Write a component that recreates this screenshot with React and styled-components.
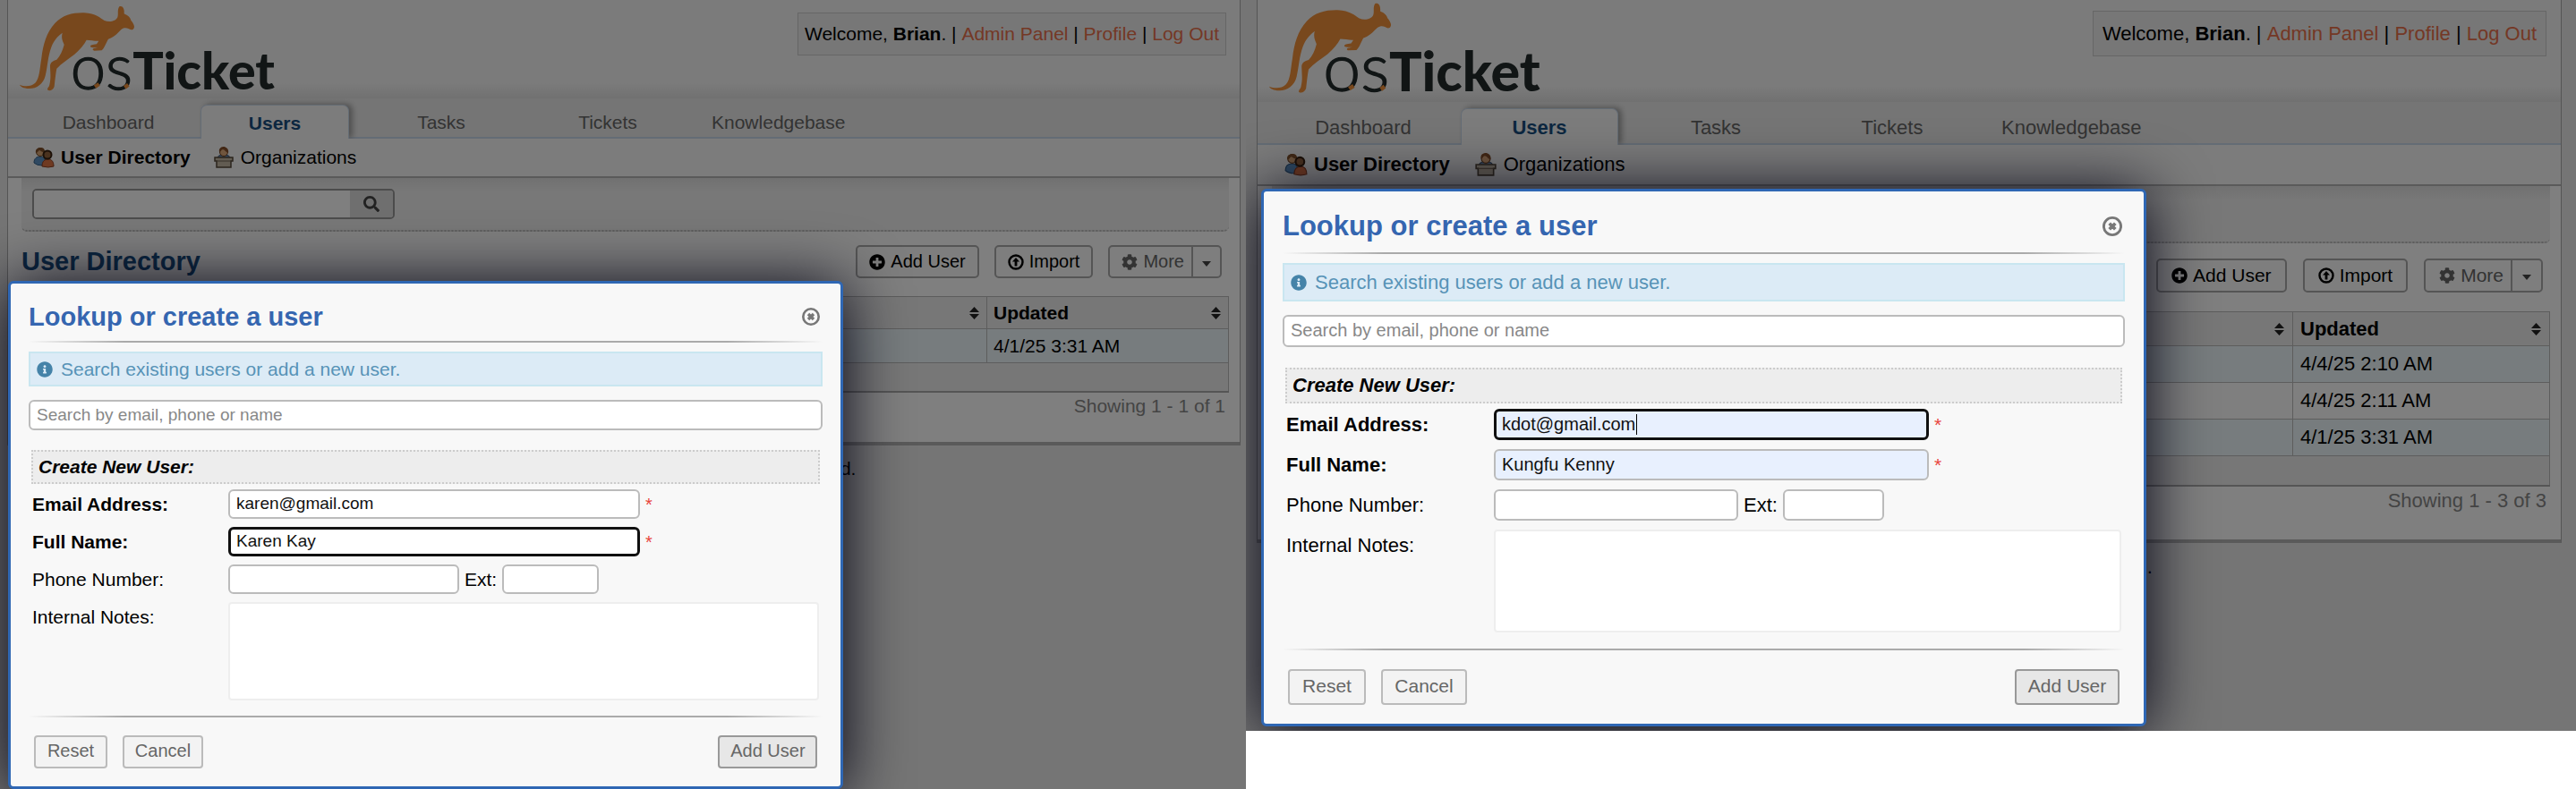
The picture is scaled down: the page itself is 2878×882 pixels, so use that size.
import React from "react";
import styled, { createGlobalStyle, css, ThemeProvider } from "styled-components";
import { FaPlusCircle, FaCog, FaSearch, FaInfoCircle } from "react-icons/fa";

const GlobalStyle = createGlobalStyle`
  *, *::before, *::after { box-sizing: border-box; }
  body {
    margin: 0;
    background: #fff;
    color: #000;
    font-family: "Liberation Sans", Arial, Helvetica, sans-serif;
  }
  button, input, textarea { font-family: inherit; margin: 0; }
`;

/* Two zoom levels of the same interface. */
const regular = {
  body: 21, control: 20, field: 19, heading: 29,
  edge: 8, edgeRight: 6, gutter: 15,
  headerHeight: 110, logoWidth: 290, logoHeight: 108, logoIndent: 11, logoBase: 2,
  welcomeTop: 14, welcomeHeight: 48, welcomePad: 7,
  navHeight: 45, tabWidth: 166, tabHeight: 38, tabGap: 20, navIndent: 29,
  subHeight: 44, subIndent: 28, subGap: 25, icon: 24, iconGap: 7,
  stickyHeight: 60, stickyPad: 12, searchWidth: 405, searchHeight: 34, searchButton: 48,
  actionTop: 15, actionHeight: 37, actionGap: 17, actionPad: 13, caretWidth: 32,
  tableTop: 20, headRow: 36, dataRow: 38, footRow: 32, dateCol: 270, cellPad: 7,
  pagerHeight: 55, pagerPad: 4, footerTop: 14,
  modalTop: 314, modalLeft: 9, modalRight: "32.3%", modalBottom: 2,
  modalPad: 20, titlePad: 17, titleHeight: 40, ruleGap: 7,
  bannerHeight: 39, bannerGap: 10, bannerIndent: 9, lookupHeight: 34, lookupGap: 15,
  sectionHeight: 38, sectionGap: 22, labelCol: 221, fieldHeight: 33, fieldGap: 9,
  wideField: 460, phoneField: 258, extField: 108, notesHeight: 110,
  endGap: 17, buttonsGap: 20, buttonHeight: 37, closeSize: 20,
  resetWidth: 82, cancelWidth: 90, submitWidth: 111,
};

const enlarged = {
  body: 22, control: 21, field: 20, heading: 31,
  edge: 12, edgeRight: 16, gutter: 16,
  headerHeight: 114, logoWidth: 308, logoHeight: 115, logoIndent: 11, logoBase: 3,
  welcomeTop: 12, welcomeHeight: 51, welcomePad: 10,
  navHeight: 48, tabWidth: 176, tabHeight: 41, tabGap: 21, navIndent: 30,
  subHeight: 46, subIndent: 30, subGap: 27, icon: 26, iconGap: 7,
  stickyHeight: 64, stickyPad: 12, searchWidth: 428, searchHeight: 37, searchButton: 50,
  actionTop: 17, actionHeight: 38, actionGap: 18, actionPad: 15, caretWidth: 34,
  tableTop: 21, headRow: 38, dataRow: 41, footRow: 33, dateCol: 287, cellPad: 8,
  pagerHeight: 59, pagerPad: 4, footerTop: 14,
  modalTop: 211, modalLeft: 17, modalRight: "32.3%", modalBottom: 5,
  modalPad: 21, titlePad: 18, titleHeight: 42, ruleGap: 8,
  bannerHeight: 43, bannerGap: 10, bannerIndent: 9, lookupHeight: 36, lookupGap: 15,
  sectionHeight: 40, sectionGap: 23, labelCol: 234, fieldHeight: 35, fieldGap: 10,
  wideField: 486, phoneField: 273, extField: 113, notesHeight: 115,
  endGap: 18, buttonsGap: 21, buttonHeight: 40, closeSize: 22,
  resetWidth: 87, cancelWidth: 96, submitWidth: 117,
};

const px = (key) => ({ theme }) => `${theme[key]}px`;

const Split = styled.main`
  display: grid;
  grid-template-columns: 1392fr 1486fr;
  align-items: start;
`;

const Screen = styled.section`
  display: grid;
  grid-template: 1fr / minmax(0, 1fr);
  overflow: hidden;
  background: #ebebeb;
  font-size: ${px("body")};
`;

const Page = styled.div`
  grid-area: 1 / 1;
  padding: 0 ${px("edgeRight")} 0 ${px("edge")};
`;

const Container = styled.div`
  background: #fff;
  border: 1px solid #aaa;
  border-top: 0;
  border-bottom: 4px solid #b4b4b4;
`;

const Header = styled.header`
  display: flex;
  align-items: flex-end;
  justify-content: space-between;
  height: ${px("headerHeight")};
  padding: 0 ${px("gutter")} ${px("logoBase")} ${px("logoIndent")};
  background: linear-gradient(#f7f7f7 84%, #e2e2e2);
`;

const LogoArt = styled.svg`
  display: block;
  width: ${px("logoWidth")};
  height: ${px("logoHeight")};
  flex: none;
  overflow: visible;
`;

const Welcome = styled.p`
  align-self: flex-start;
  display: flex;
  align-items: center;
  height: ${px("welcomeHeight")};
  margin: ${px("welcomeTop")} 0 0;
  padding: 0 ${px("welcomePad")};
  border: 1px solid #ccc;
  background: #efefef;
  white-space: pre;
`;

const OrangeLink = styled.a`
  color: #e8704a;
  text-decoration: none;
`;

const Nav = styled.nav`
  display: flex;
  align-items: flex-end;
  gap: ${px("tabGap")};
  height: ${px("navHeight")};
  padding-left: ${px("navIndent")};
  background: #ebebeb;
  box-shadow: inset 0 -2px 0 #c9d8ea;
`;

const Tab = styled.a`
  display: flex;
  align-items: center;
  justify-content: center;
  min-width: ${px("tabWidth")};
  height: ${px("tabHeight")};
  padding: 2px 13px 0;
  color: #666;
  text-decoration: none;
  ${({ $active }) => $active && css`
    color: #184e81;
    font-weight: bold;
    background: #f9f9f9;
    border: 1px solid #c9d8ea;
    border-bottom: 0;
    border-radius: 7px 7px 0 0;
    box-shadow: 4px -1px 6px #a0a0a0;
    clip-path: inset(-10px -14px 0 -10px);
  `}
`;

const SubNav = styled.nav`
  display: flex;
  align-items: center;
  gap: ${px("subGap")};
  height: ${px("subHeight")};
  padding-left: ${px("subIndent")};
  background: #f9f9f9;
  border-bottom: 2px solid #b4b4b4;
`;

const SubLink = styled.a`
  display: flex;
  align-items: center;
  gap: ${px("iconGap")};
  color: #000;
  text-decoration: none;
  font-weight: ${({ $active }) => ($active ? "bold" : "normal")};
  svg { width: ${px("icon")}; height: ${px("icon")}; }
`;

const Content = styled.div`
  padding: 0 12px 0 ${px("gutter")};
`;

const SearchBar = styled.form`
  height: ${px("stickyHeight")};
  padding: ${px("stickyPad")};
  background: linear-gradient(#e2e2e2, #f0f0f0 25%);
  border-bottom: 2px dotted #bbb;
  border-radius: 0 0 6px 6px;
`;

const SearchGroup = styled.div`
  display: flex;
  width: ${px("searchWidth")};
  height: ${px("searchHeight")};
  border: 2px solid #999;
  border-radius: 5px;
  overflow: hidden;
`;

const SearchInput = styled.input`
  flex: 1;
  min-width: 0;
  border: 0;
  background: #fff;
`;

const SearchButton = styled.button`
  width: ${px("searchButton")};
  padding: 0;
  border: 0;
  background: #dedede;
  color: #444;
  font-size: 18px;
  svg { display: block; margin: 0 auto; }
`;

const TitleRow = styled.div`
  display: flex;
  align-items: center;
  justify-content: space-between;
  padding-top: ${px("actionTop")};
`;

const Heading = styled.h1`
  margin: 0;
  color: #184e81;
  font-size: ${px("heading")};
  line-height: ${px("actionHeight")};
`;

const Actions = styled.div`
  display: flex;
  gap: ${px("actionGap")};
  margin-left: auto;
  padding-right: 8px;
`;

const ActionButton = styled.button`
  display: flex;
  align-items: center;
  gap: 6px;
  height: ${px("actionHeight")};
  padding: 0 ${px("actionPad")};
  border: 2px solid #aaa;
  border-radius: 5px;
  background: #fcfcfc;
  color: #000;
  font-size: ${px("control")};
  svg { width: 18px; height: 18px; }
`;

const MoreButton = styled(ActionButton)`
  padding-right: 0;
  color: #666;
`;

const MoreCaret = styled.span`
  display: flex;
  align-items: center;
  justify-content: center;
  align-self: stretch;
  width: ${px("caretWidth")};
  margin-left: 2px;
  border-left: 2px solid #aaa;
  &::after {
    content: "";
    margin-top: 4px;
    border: 5px solid transparent;
    border-top: 6px solid #444;
    border-bottom: 0;
  }
`;

const Table = styled.table`
  width: 100%;
  margin-top: ${px("tableTop")};
  border-collapse: collapse;
  table-layout: fixed;
  th, td { border: 1px solid #bbb; padding: 0 ${px("cellPad")}; text-align: left; }
  thead tr { height: ${px("headRow")}; background: #eee; }
  tbody tr { height: ${px("dataRow")}; background: #fff; }
  tbody tr:nth-child(odd) { background: #eef8fd; }
  tfoot tr { height: ${px("footRow")}; background: #eee; }
  tfoot td { border-bottom: 2px solid #aaa; }
`;

const DateColumn = styled.col`
  width: ${px("dateCol")};
`;

const SortHead = styled.div`
  display: flex;
  align-items: center;
  justify-content: space-between;
  svg { width: 13px; height: 18px; margin-left: auto; }
`;

const Pager = styled.div`
  height: ${px("pagerHeight")};
  padding: 3px ${px("pagerPad")} 0;
  text-align: right;
  color: #888;
`;

const Footer = styled.footer`
  margin-top: ${px("footerTop")};
  text-align: center;
  white-space: pre;
`;

const Overlay = styled.div`
  grid-area: 1 / 1;
  z-index: 1;
  display: flex;
  align-items: flex-start;
  padding: ${px("modalTop")} ${({ theme }) => theme.modalRight} ${px("modalBottom")} ${px("modalLeft")};
  background: rgba(0, 0, 0, 0.5);
`;

const Dialog = styled.div`
  flex: 1;
  min-width: 0;
  padding: ${px("titlePad")} ${px("modalPad")} ${px("modalPad")};
  border: 3px solid #2f67b4;
  border-radius: 6px;
  background: #f8f8f8;
  box-shadow: 0 5px 70px #001;
`;

const DialogHead = styled.div`
  display: flex;
  align-items: center;
  justify-content: space-between;
  height: ${px("titleHeight")};
  padding-right: 3px;
`;

const DialogTitle = styled.h2`
  margin: 0;
  color: #3566b0;
  font-size: ${px("heading")};
`;

const CloseButton = styled.button`
  padding: 0;
  border: 0;
  background: none;
  color: #777;
  svg { display: block; width: ${px("closeSize")}; height: ${px("closeSize")}; }
`;

const Rule = styled.hr`
  height: 2px;
  margin: ${({ theme, $end }) => ($end ? theme.endGap : theme.ruleGap)}px 0 0;
  border: 0;
  background: linear-gradient(to right, transparent, #aaa 12%, #aaa 88%, transparent);
`;

const Banner = styled.p`
  display: flex;
  align-items: center;
  gap: ${px("bannerIndent")};
  height: ${px("bannerHeight")};
  margin: ${px("bannerGap")} 0 0;
  padding: 0 7px;
  border: 2px solid #c9e6f0;
  background: #dcebf6;
  color: #5793b7;
  svg { width: 18px; height: 18px; color: #4583a8; }
`;

const TextInput = styled.input`
  width: ${({ theme, $size }) => ($size ? `${theme[$size]}px` : "100%")};
  height: ${({ theme, $tall }) => ($tall ? theme.lookupHeight : theme.fieldHeight)}px;
  padding: 0 ${({ $focused }) => ($focused ? 6 : 7)}px 1px;
  border: ${({ $focused }) => ($focused ? "3px solid #101010" : "2px solid #bbb")};
  border-radius: 6px;
  outline: 0;
  background: ${({ $filled }) => ($filled ? "#e8f0fe" : "#fff")};
  color: #111;
  font-size: ${px("field")};
  &::placeholder { color: #888; opacity: 1; }
`;

const Lookup = styled.div`
  display: flex;
  margin-top: ${px("lookupGap")};
`;

const UserForm = styled.form`
  margin-top: ${px("sectionGap")};
`;

const SectionTitle = styled.h3`
  display: flex;
  align-items: center;
  height: ${px("sectionHeight")};
  margin: 0 3px;
  padding-left: 6px;
  border: 2px dotted #ccc;
  background: #ededed;
  font-size: ${px("body")};
  font-style: italic;
`;

const Fields = styled.div`
  display: grid;
  grid-template-columns: ${px("labelCol")} minmax(0, 1fr);
  row-gap: ${px("fieldGap")};
  margin: 6px 4px 0 2px;
`;

const FieldLabel = styled.label`
  line-height: ${px("fieldHeight")};
  padding-left: 2px;
  font-weight: ${({ $required }) => ($required ? "bold" : "normal")};
`;

const FieldCell = styled.div`
  position: relative;
  display: flex;
  align-items: center;
  gap: 6px;
`;

const Required = styled.span`
  color: #e8443c;
  font-size: ${px("control")};
  line-height: 20px;
`;

const TextCaret = styled.span`
  position: absolute;
  top: 6px;
  left: 159px;
  width: 1px;
  height: 23px;
  background: #000;
`;

const Notes = styled.textarea`
  display: block;
  width: 100%;
  height: ${px("notesHeight")};
  border: 2px solid #eee;
  border-radius: 4px;
  background: #fff;
  resize: none;
`;

const Buttons = styled.div`
  display: flex;
  gap: 17px;
  margin-top: ${px("buttonsGap")};
  padding: 0 6px;
`;

const FormButton = styled.button`
  width: ${px("resetWidth")};
  height: ${px("buttonHeight")};
  padding: 0 0 2px;
  border: 2px solid #bbb;
  border-radius: 4px;
  background: #f3f3f3;
  color: #666;
  font-size: ${px("control")};
`;

const CancelButton = styled(FormButton)`
  width: ${px("cancelWidth")};
`;

const SubmitButton = styled(FormButton)`
  width: ${px("submitWidth")};
  margin-left: auto;
  border-color: #999;
  background: #e7e7e7;
`;

function Logo() {
  return (
    <LogoArt viewBox="0 0 870 324" role="img" aria-label="osTicket">
      <path
        fill="#f0903a"
        d="M6 284C22 291 45 291 58 278C73 262 73 230 79 195C84 150 96 108 124 78C150 50 185 42 222 43C262 45 275 60 290 69C306 76 328 72 334 58C338 46 332 34 340 22C350 18 358 28 356 46C366 51 376 56 379 68C386 76 390 84 390 90C389 97 386 100 380 100C372 97 366 92 356 94C347 96 345 101 338 107C328 118 314 128 303 131C296 142 290 162 281 169L256 170C248 168 250 162 258 162L268 159C260 160 248 161 243 157C242 151 250 150 264 148L271 137C258 138 244 134 230 134C222 150 208 166 190 182C168 199 146 212 130 230C126 250 124 275 122 290C118 302 106 307 99 301C98 294 106 290 106 284C112 260 108 240 108 222C108 208 118 204 130 200C142 188 150 170 155 150C152 140 144 130 149 110C130 124 120 138 112 158C100 190 100 220 92 254C85 282 62 298 36 297C20 296 8 291 6 284Z"
      />
      <text x="176" y="299" fontFamily="Lato, sans-serif" fill="#222b2b">
        <tspan fontSize="212" fontWeight="300" stroke="#222b2b" strokeWidth="4">os</tspan>
        <tspan fontSize="172" fontWeight="900">Ticket</tspan>
      </text>
      <path d="M258 291L272 282M358 293L370 284" stroke="#f0903a" strokeWidth="13" />
    </LogoArt>
  );
}

function UsersIcon() {
  return (
    <svg viewBox="0 0 24 24" aria-hidden="true">
      <path d="M1 18C1 13 4 11 8 11S14 13 14 19L10 21Q4 21 1 18Z" fill="#5e93c4" stroke="#345f88" />
      <circle cx="8" cy="6" r="4.5" fill="#dba878" stroke="#6b4526" />
      <path d="M3 7C2 2 6 1 9 1S14 4 12 6C9 6 8 4 7 4S5 7 3 7Z" fill="#80502a" />
      <path d="M10 22C10 16 13 14 17 14S23 17 23 22Q17 24 10 22Z" fill="#df7444" stroke="#8d4022" />
      <circle cx="16" cy="9" r="4.5" fill="#94643e" stroke="#38210f" strokeWidth="2" />
    </svg>
  );
}

function OrganizationIcon() {
  return (
    <svg viewBox="0 0 24 24" aria-hidden="true">
      <path d="M5 13C5 10 8 9 12 9S19 10 19 13Z" fill="#6b8cb5" stroke="#3d5270" />
      <circle cx="12" cy="6" r="4.5" fill="#e0ac7c" stroke="#704422" />
      <path d="M7 6C6 1 10 0 12 0S18 2 17 7C14 6 13 3 11 3S9 6 7 6Z" fill="#86502a" />
      <path d="M2 12H22V16H20V23H4V16H2Z" fill="#c4b8a4" stroke="#554a3a" strokeWidth="1.5" />
      <path d="M4 16H20" stroke="#6f6350" />
    </svg>
  );
}

function ImportIcon() {
  return (
    <svg viewBox="0 0 18 18" aria-hidden="true">
      <circle cx="9" cy="9" r="7.5" fill="none" stroke="currentColor" strokeWidth="2.4" />
      <path d="M9 4L13 8.5H10.4V13.5H7.6V8.5H5Z" fill="currentColor" />
    </svg>
  );
}

function CloseIcon() {
  return (
    <svg viewBox="0 0 20 20" aria-hidden="true">
      <circle cx="10" cy="10" r="8.7" fill="none" stroke="currentColor" strokeWidth="2.6" />
      <path d="M7 7L13 13M13 7L7 13" stroke="currentColor" strokeWidth="3.4" />
    </svg>
  );
}

function SortIcon() {
  return (
    <svg viewBox="0 0 13 18" aria-hidden="true">
      <path d="M6.5 2L12 8H1ZM6.5 16L12 10H1Z" fill="#222" />
    </svg>
  );
}

const TABS = ["Dashboard", "Users", "Tasks", "Tickets", "Knowledgebase"];

function Directory({ title, dates, summary }) {
  return (
    <Page>
      <Container>
        <Header>
          <Logo />
          <Welcome>
            {"Welcome, "}<strong>Brian</strong>{". | "}
            <OrangeLink href="#admin">Admin Panel</OrangeLink>{" | "}
            <OrangeLink href="#profile">Profile</OrangeLink>{" | "}
            <OrangeLink href="#logout">Log Out</OrangeLink>
          </Welcome>
        </Header>
        <Nav>
          {TABS.map((tab) => (
            <Tab key={tab} href={`#${tab.toLowerCase()}`} $active={tab === "Users"}>{tab}</Tab>
          ))}
        </Nav>
        <SubNav>
          <SubLink href="#directory" $active><UsersIcon />User Directory</SubLink>
          <SubLink href="#organizations"><OrganizationIcon />Organizations</SubLink>
        </SubNav>
        <Content>
          <SearchBar>
            <SearchGroup>
              <SearchInput type="search" aria-label="Search" />
              <SearchButton type="button" aria-label="Search"><FaSearch /></SearchButton>
            </SearchGroup>
          </SearchBar>
          <TitleRow>
            {title && <Heading>{title}</Heading>}
            <Actions>
              <ActionButton type="button"><FaPlusCircle />Add User</ActionButton>
              <ActionButton type="button"><ImportIcon />Import</ActionButton>
              <MoreButton type="button"><FaCog />More<MoreCaret /></MoreButton>
            </Actions>
          </TitleRow>
          <Table>
            <colgroup><col /><DateColumn /></colgroup>
            <thead>
              <tr>
                <th><SortHead><SortIcon /></SortHead></th>
                <th><SortHead>Updated<SortIcon /></SortHead></th>
              </tr>
            </thead>
            <tbody>
              {dates.map((date) => <tr key={date}><td /><td>{date}</td></tr>)}
            </tbody>
            <tfoot><tr><td colSpan={2} /></tr></tfoot>
          </Table>
          <Pager>{summary}</Pager>
        </Content>
      </Container>
      <Footer>{"Copyright ©  2006-2025  osTicket   All Rights Reserved."}</Footer>
    </Page>
  );
}

function UserDialog({ id, email, name, focus, filled }) {
  return (
    <Overlay>
      <Dialog role="dialog" aria-labelledby={`${id}-title`}>
        <DialogHead>
          <DialogTitle id={`${id}-title`}>Lookup or create a user</DialogTitle>
          <CloseButton type="button" aria-label="Close"><CloseIcon /></CloseButton>
        </DialogHead>
        <Rule />
        <Banner><FaInfoCircle />Search existing users or add a new user.</Banner>
        <Lookup>
          <TextInput $tall aria-label="Search users" placeholder="Search by email, phone or name" />
        </Lookup>
        <UserForm>
          <SectionTitle>Create New User:</SectionTitle>
          <Fields>
            <FieldLabel htmlFor={`${id}-email`} $required>Email Address:</FieldLabel>
            <FieldCell>
              <TextInput id={`${id}-email`} $size="wideField" $focused={focus === "email"} $filled={filled} defaultValue={email} />
              {focus === "email" && <TextCaret />}
              <Required>*</Required>
            </FieldCell>
            <FieldLabel htmlFor={`${id}-name`} $required>Full Name:</FieldLabel>
            <FieldCell>
              <TextInput id={`${id}-name`} $size="wideField" $focused={focus === "name"} $filled={filled} defaultValue={name} />
              <Required>*</Required>
            </FieldCell>
            <FieldLabel htmlFor={`${id}-phone`}>Phone Number:</FieldLabel>
            <FieldCell>
              <TextInput id={`${id}-phone`} $size="phoneField" />
              <label htmlFor={`${id}-ext`}>Ext:</label>
              <TextInput id={`${id}-ext`} $size="extField" />
            </FieldCell>
            <FieldLabel htmlFor={`${id}-notes`}>Internal Notes:</FieldLabel>
            <Notes id={`${id}-notes`} />
          </Fields>
          <Rule $end />
          <Buttons>
            <FormButton type="reset">Reset</FormButton>
            <CancelButton type="button">Cancel</CancelButton>
            <SubmitButton type="button">Add User</SubmitButton>
          </Buttons>
        </UserForm>
      </Dialog>
    </Overlay>
  );
}

export default function App() {
  return (
    <>
      <GlobalStyle />
      <Split>
        <ThemeProvider theme={regular}>
          <Screen>
            <Directory title="User Directory" dates={["4/1/25 3:31 AM"]} summary="Showing 1 - 1 of 1" />
            <UserDialog id="first" email="karen@gmail.com" name="Karen Kay" focus="name" />
          </Screen>
        </ThemeProvider>
        <ThemeProvider theme={enlarged}>
          <Screen>
            <Directory
              dates={["4/4/25 2:10 AM", "4/4/25 2:11 AM", "4/1/25 3:31 AM"]}
              summary="Showing 1 - 3 of 3"
            />
            <UserDialog id="second" email="kdot@gmail.com" name="Kungfu Kenny" focus="email" filled />
          </Screen>
        </ThemeProvider>
      </Split>
    </>
  );
}
